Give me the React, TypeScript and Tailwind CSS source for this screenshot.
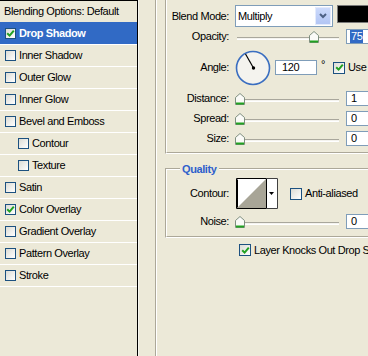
import React from "react";

const items = [
  { label: "Drop Shadow", checked: true, selected: true },
  { label: "Inner Shadow" },
  { label: "Outer Glow" },
  { label: "Inner Glow" },
  { label: "Bevel and Emboss" },
  { label: "Contour", indent: true },
  { label: "Texture", indent: true },
  { label: "Satin" },
  { label: "Color Overlay", checked: true },
  { label: "Gradient Overlay" },
  { label: "Pattern Overlay" },
  { label: "Stroke" },
];

const CheckBox = ({ checked, size = "w-[11px] h-[11px]" }: { checked?: boolean; size?: string }) => (
  <span
    className={`${size} shrink-0 flex items-center justify-center border border-[#1C5180] bg-linear-to-br from-[#DCDCD5] to-white`}
  >
    {checked && (
      <svg width="9" height="9" viewBox="0 0 9 9">
        <path d="M1.2 4.2 L3.6 6.6 L7.8 1.6" stroke="#21A121" strokeWidth="2" fill="none" />
      </svg>
    )}
  </span>
);

const Thumb = () => (
  <svg width="10" height="12" viewBox="0 0 10 12">
    <path d="M5 0.5 L9.5 4.5 V11.5 H0.5 V4.5 Z" fill="#FAFAF7" stroke="#7F8F80" />
    <rect x="1" y="9.5" width="8" height="2" fill="#21A121" />
  </svg>
);

const Slider = ({ pct }: { pct: number }) => (
  <div className="relative w-[104px] h-[15px] shrink-0">
    <div className="absolute left-[2px] right-0 top-[8px] h-[3px] border-t border-[#A9A79C] bg-[#F4F3EE] border-b border-b-white" />
    <div className="absolute top-[2px]" style={{ left: `${pct * 0.98}px` }}>
      <Thumb />
    </div>
  </div>
);

const Field = ({ children, w = "w-[40px]" }: { children: React.ReactNode; w?: string }) => (
  <div className={`${w} h-[15px] shrink-0 border border-[#7F9DB9] bg-white flex items-center pl-[4px]`}>
    {children}
  </div>
);

const Row = ({ label, className = "", children }: { label: string; className?: string; children: React.ReactNode }) => (
  <div className={`flex items-center ${className}`}>
    <div className="w-[62px] shrink-0 text-right">{label}</div>
    <div className="ml-[6px] flex items-center">{children}</div>
  </div>
);

const SliderRow = ({ label, value, pct, className = "" }: { label: string; value: React.ReactNode; pct: number; className?: string }) => (
  <Row label={label} className={`h-[15px] ${className}`}>
    <Slider pct={pct} />
    <div className="ml-[7px]">
      <Field>{value}</Field>
    </div>
  </Row>
);

export default function App() {
  return (
    <div className="w-[368px] h-[356px] overflow-hidden bg-[#ECE9D8] flex font-['Liberation_Sans',Arial,sans-serif] text-[11px] tracking-[-0.4px] text-black leading-[13px]">
      {/* style list */}
      <div className="w-[139px] shrink-0 border-r border-[#F7F6F0]">
        <div className="w-[138px] h-full border-t border-r border-black">
          <div className="h-[21px] flex items-center pl-[4px]">Blending Options: Default</div>
          {items.map((it) => (
            <div
              key={it.label}
              className={`flex items-center border-b border-white ${
                it.selected ? "h-[23px] bg-[#316AC5] text-white font-bold" : "h-[22px]"
              } ${it.indent ? "pl-[18px]" : "pl-[5px]"}`}
            >
              <CheckBox checked={it.checked} />
              <span className="ml-[3px]">{it.label}</span>
            </div>
          ))}
        </div>
      </div>

      <div className="ml-[16px] w-[2px] shrink-0 border-l border-[#ACA899] border-r border-r-white" />

      <div className="pl-[8px] flex flex-col shrink-0">
        {/* Structure */}
        <div className="w-[230px] border-l border-b border-l-[#ACA899] border-b-white">
          <div className="border-l border-b border-l-white border-b-[#ACA899] pt-[5px] pb-[6px] flex flex-col">
            <Row label="Blend Mode:" className="h-[22px]">
              <div className="w-[98px] h-[22px] border border-[#7F9DB9] bg-white flex items-stretch">
                <span className="flex-1 flex items-center pl-[2px]">Multiply</span>
                <span className="w-[16px] m-px border border-[#E3EAFC] bg-linear-to-b from-[#CCDAFB] to-[#B2C5F4] flex items-center justify-center">
                  <svg width="8" height="6" viewBox="0 0 8 6">
                    <path d="M1 1 L4 4 L7 1" stroke="#4D6185" strokeWidth="2" fill="none" />
                  </svg>
                </span>
              </div>
              <div className="ml-[4px] w-[40px] h-[18px] self-start border border-[#7A7A7A] bg-black" />
            </Row>
            <SliderRow
              label="Opacity:"
              pct={75}
              className="mt-[2px]"
              value={<span className="-ml-[1px] bg-[#316AC5] text-white px-[1px]">75</span>}
            />
            <Row label="Angle:" className="mt-[6px] h-[35px]">
              <svg width="36" height="36" viewBox="0 0 36 36" className="shrink-0">
                <circle cx="18" cy="18" r="16.5" fill="#F4F3EE" stroke="#3A6EC0" strokeWidth="1.6" />
                <line x1="18.5" y1="18" x2="10.5" y2="4" stroke="#000" strokeWidth="1.2" />
                <circle cx="18.5" cy="18" r="1.7" fill="#000" />
              </svg>
              <div className="ml-[4px]">
                <Field w="w-[42px]">
                  <span className="pl-[2px]">120</span>
                </Field>
              </div>
              <span className="ml-[4px] -mt-[6px]">°</span>
              <span className="ml-[8px]">
                <CheckBox checked size="w-[12px] h-[12px]" />
              </span>
              <span className="ml-[3px] whitespace-nowrap">Use Global Light</span>
            </Row>
            <SliderRow label="Distance:" pct={0} className="mt-[6px]" value="1" />
            <SliderRow label="Spread:" pct={0} className="mt-[5px]" value="0" />
            <SliderRow label="Size:" pct={0} className="mt-[5px]" value="0" />
          </div>
        </div>

        {/* Quality */}
        <div className="mt-[14px] w-[230px] border-t border-l border-t-[#ACA899] border-l-[#ACA899] border-b border-b-white">
          <div className="border-t border-l border-t-white border-l-white border-b border-b-[#ACA899] pb-[7px] flex flex-col">
            <div className="-mt-[8px] ml-[13px] w-fit px-[2px] h-[14px] leading-[14px] bg-[#ECE9D8] text-[#2E5FCC] font-bold">
              Quality
            </div>
            <Row label="Contour:" className="mt-[2px] h-[31px]">
              <svg width="42" height="31" viewBox="0 0 42 31" className="ml-px shrink-0">
                <rect x="0" y="0" width="42" height="31" fill="#fff" />
                <polygon points="1,30 30,1 30,30" fill="#A8A597" />
                <path d="M0.5 0.5 H30.5 V30.5 H0.5 Z" fill="none" stroke="#000" />
                <path d="M1.5 1.5 V29.5" stroke="#000" />
                <path d="M30.5 0.5 H41.5 V30.5 H30.5" fill="none" stroke="#404040" />
                <polygon points="33,14 38,14 35.5,17" fill="#000" />
              </svg>
              <span className="ml-[12px]">
                <CheckBox size="w-[12px] h-[12px]" />
              </span>
              <span className="ml-[3px]">Anti-aliased</span>
            </Row>
            <SliderRow label="Noise:" pct={0} className="mt-[5px]" value="0" />
          </div>
        </div>

        <div className="mt-[6px] ml-[74px] flex items-center h-[12px]">
          <CheckBox checked size="w-[12px] h-[12px]" />
          <span className="ml-[3px] whitespace-nowrap">Layer Knocks Out Drop Shadow</span>
        </div>
      </div>
    </div>
  );
}
